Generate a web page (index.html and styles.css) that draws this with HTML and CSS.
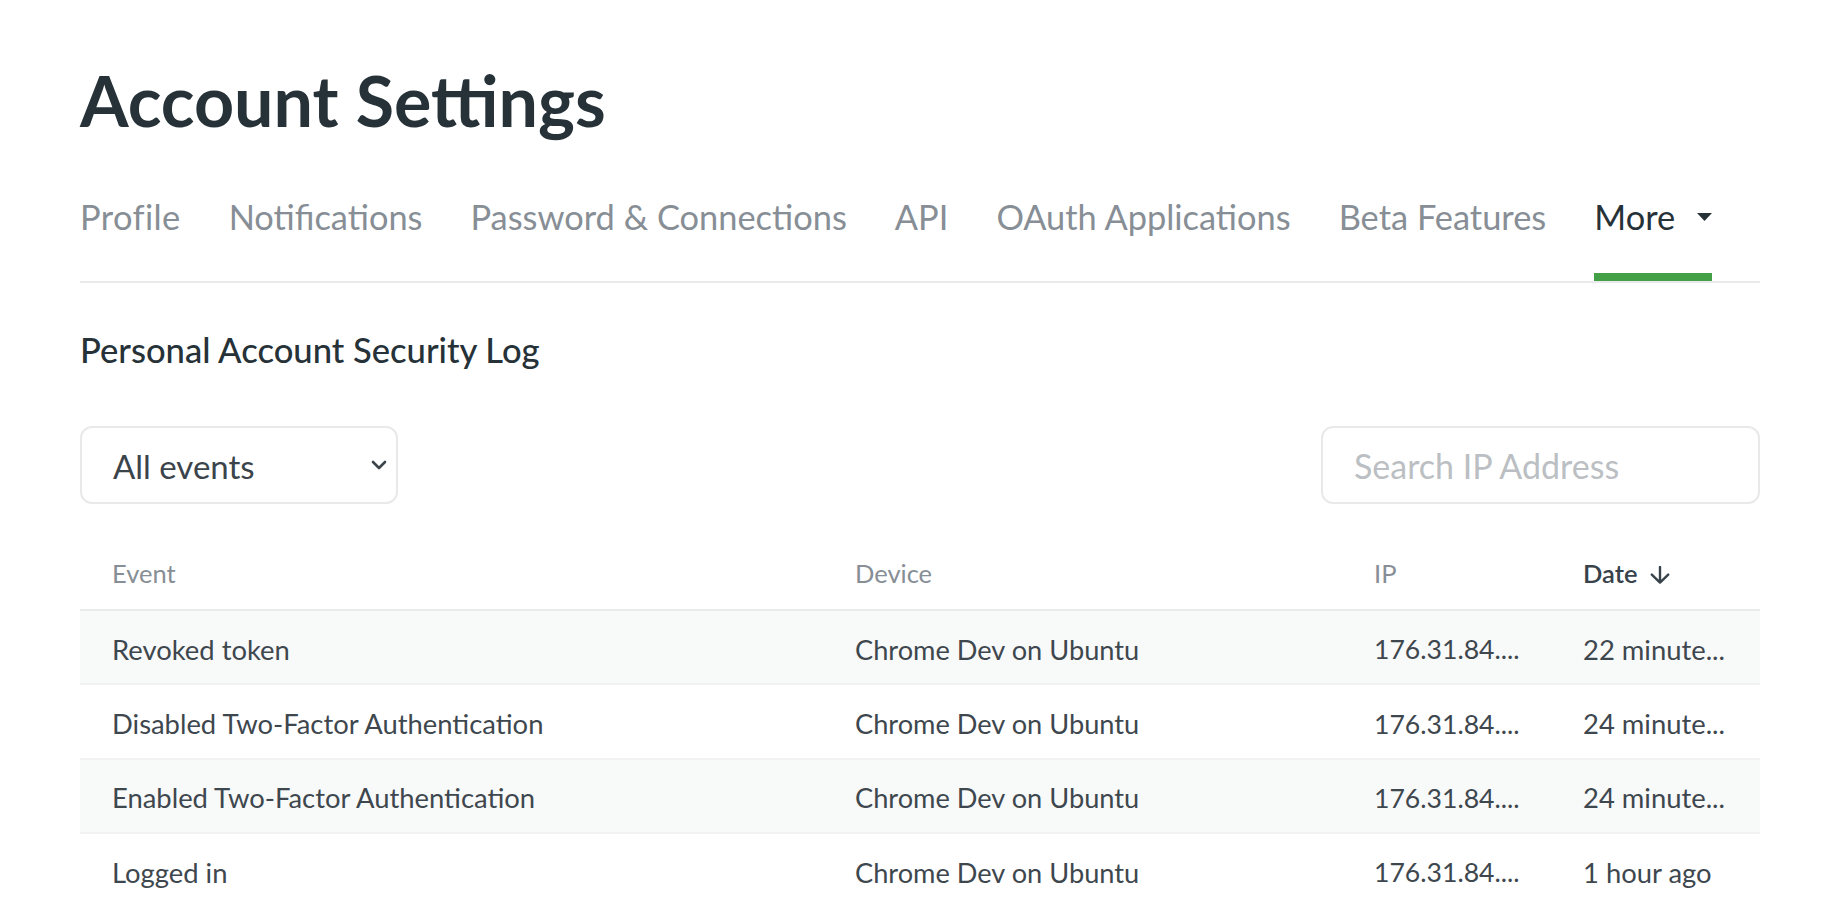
FILE: index.html
```html
<!DOCTYPE html>
<html lang="en">
<head>
<meta charset="utf-8">
<title>Account Settings</title>
<link rel="stylesheet" href="styles.css">
</head>
<body>
<main class="page">
  <h1 class="title">Account Settings</h1>
  <nav class="tabs">
    <a class="tab">Profile</a>
    <a class="tab">Notifications</a>
    <a class="tab">Password &amp; Connections</a>
    <a class="tab">API</a>
    <a class="tab">OAuth Applications</a>
    <a class="tab">Beta Features</a>
    <a class="tab tab-active">More
      <svg class="caret" width="15" height="8" viewBox="0 0 15 8"><path d="M0 0H15L7.5 8Z" fill="#263238"/></svg>
    </a>
  </nav>

  <h2 class="section-title">Personal Account Security Log</h2>

  <div class="filters">
    <div class="select">
      <span>All events</span>
      <svg class="chevron" width="16" height="10" viewBox="0 0 16 10"><path d="M2 2L8 8L14 2" fill="none" stroke="#3b444b" stroke-width="2.6" stroke-linecap="round" stroke-linejoin="round"/></svg>
    </div>
    <input class="search" type="text" placeholder="Search IP Address">
  </div>

  <table class="log">
    <colgroup>
      <col class="c-event">
      <col class="c-device">
      <col class="c-ip">
      <col class="c-date">
    </colgroup>
    <thead>
      <tr>
        <th>Event</th>
        <th>Device</th>
        <th>IP</th>
        <th class="sorted"><span class="sort">Date
          <svg width="20" height="18" viewBox="0 0 20 18"><path d="M10 1V16.5M1.8 8.6L10 16.6L18.2 8.6" fill="none" stroke="#37424a" stroke-width="2.4" stroke-linecap="round" stroke-linejoin="round"/></svg></span></th>
      </tr>
    </thead>
    <tbody>
      <tr><td>Revoked token</td><td>Chrome Dev on Ubuntu</td><td>176.31.84....</td><td>22 minute...</td></tr>
      <tr><td>Disabled Two-Factor Authentication</td><td>Chrome Dev on Ubuntu</td><td>176.31.84....</td><td>24 minute...</td></tr>
      <tr><td>Enabled Two-Factor Authentication</td><td>Chrome Dev on Ubuntu</td><td>176.31.84....</td><td>24 minute...</td></tr>
      <tr><td>Logged in</td><td>Chrome Dev on Ubuntu</td><td>176.31.84....</td><td>1 hour ago</td></tr>
    </tbody>
  </table>
</main>
</body>
</html>
```

FILE: styles.css
```css
* { box-sizing: border-box; }

html, body {
  margin: 0;
  padding: 0;
  background: #ffffff;
}

body {
  font-family: Lato, "Noto Sans", "Liberation Sans", sans-serif;
  color: #263238;
}

.page {
  padding: 58px 80px 0;
}

.title {
  margin: 0;
  font-size: 70px;
  line-height: 1.2;
  font-weight: 700;
  color: #263238;
}

.tabs {
  display: flex;
  gap: 48px;
  margin-top: 54px;
  border-bottom: 2px solid #e9eaeb;
}

.tab {
  display: flex;
  align-items: flex-start;
  gap: 22px;
  font-size: 34.4px;
  line-height: 1.2;
  color: #878e95;
  padding-bottom: 35.7px;
  border-bottom: 8px solid transparent;
}

.tab:first-child {
  letter-spacing: 0.4px;
}

.tab-active {
  color: #263238;
  border-bottom-color: #43a047;
}

.caret {
  margin-top: 17px;
}

.section-title {
  margin: 45.8px 0 0;
  font-size: 34.6px;
  line-height: 1.2;
  font-weight: 500;
  color: #263238;
}

.filters {
  display: flex;
  justify-content: space-between;
  margin-top: 55.7px;
}

.select {
  width: 318px;
  height: 78px;
  border: 2px solid #e8e9ea;
  border-radius: 12px;
  display: flex;
  align-items: center;
  justify-content: space-between;
  padding: 2px 9px 0 31px;
  font-size: 33px;
  color: #3b444b;
}

.chevron {
  margin-top: -1px;
}

.search {
  width: 439px;
  height: 78px;
  border: 2px solid #e8e9ea;
  border-radius: 12px;
  padding: 2px 31px 0;
  font-family: inherit;
  font-size: 34px;
  color: #3b444b;
  outline: none;
  background: #fff;
}

.search::placeholder {
  color: #bbbfc3;
}

.log {
  width: 100%;
  margin-top: 32px;
  border-collapse: collapse;
  table-layout: fixed;
}

.c-event { width: 743px; }
.c-device { width: 519px; }
.c-ip { width: 209px; }
.c-date { width: 209px; }

.log th {
  height: 74px;
  padding: 2px 32px 0;
  text-align: left;
  font-size: 25.5px;
  font-weight: 400;
  color: #878e95;
  border-bottom: 2px solid #e9eaeb;
  vertical-align: middle;
  white-space: nowrap;
}

.log th.sorted {
  color: #37424a;
  font-weight: 600;
}

.sort {
  display: inline-flex;
  align-items: center;
  gap: 13px;
}

.sort svg {
  margin-top: 4px;
}

.log td {
  height: 74.4px;
  padding: 4px 32px 0;
  font-size: 27.4px;
  color: #3e474e;
  border-bottom: 2px solid #f1f2f3;
  vertical-align: middle;
  white-space: nowrap;
  overflow: hidden;
}

.log td:nth-child(3) {
  font-size: 26.6px;
}

.log td:nth-child(2) {
  font-size: 27.2px;
}

.log tbody tr:nth-child(odd) td {
  background: #f8f9f9;
}
```
